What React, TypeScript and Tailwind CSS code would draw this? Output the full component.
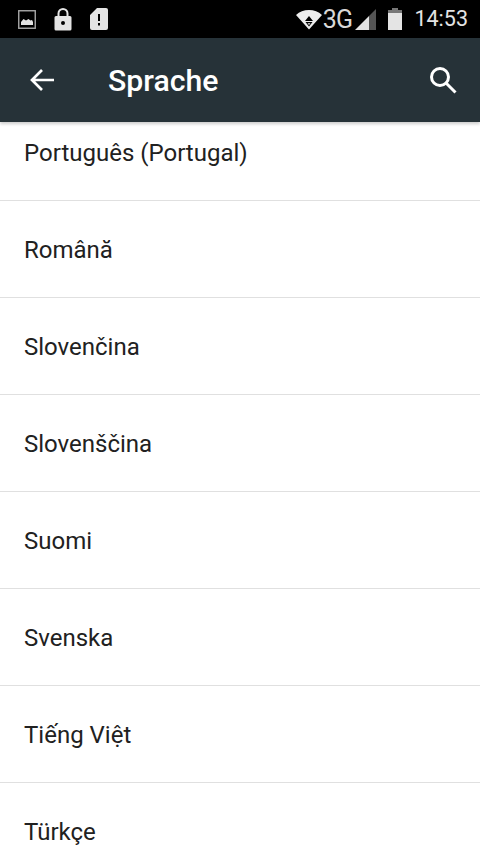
const LANGUAGES = ['Português (Portugal)', 'Română', 'Slovenčina', 'Slovenščina', 'Suomi', 'Svenska', 'Tiếng Việt', 'Türkçe'];

function StatusBar() {
    return (
        <div className="flex h-[38px] shrink-0 items-center bg-black pl-[18px] pr-[12px] text-[#e4e4e4]">
            <svg width="18" height="19" viewBox="0 0 18 19" className="mr-[18px]">
                <rect x="0.75" y="0.75" width="16.5" height="17.5" fill="none" stroke="#a8a8a8" strokeWidth="1.4" />
                <path d="M3 15v-3l2.500-3 2.500 1.500L10.500 9l2 1.500 1.500-.5 1 2v3z" fill="#e4e4e4" />
            </svg>
            <svg width="18" height="24" viewBox="0 0 18 24" className="mr-[18px]">
                <path d="M4.500 10V6.500a4.500 4.500 0 0 1 9 0V10" fill="none" stroke="#e4e4e4" strokeWidth="2" />
                <path fillRule="evenodd" d="M2 9h14a1.500 1.500 0 0 1 1.500 1.500V22a1.500 1.500 0 0 1-1.500 1.500H2A1.500 1.500 0 0 1 .5 22V10.500A1.500 1.500 0 0 1 2 9zm7 5a2 2 0 1 0 0 4 2 2 0 0 0 0-4z" fill="#e4e4e4" />
            </svg>
            <svg width="18" height="22" viewBox="0 0 18 22">
                <path fillRule="evenodd" d="M7 0h9a2 2 0 0 1 2 2v18a2 2 0 0 1-2 2H2a2 2 0 0 1-2-2V7zM8 6v7h2V6zm0 9v2.500h2V15z" fill="#e4e4e4" />
            </svg>
            <div className="ml-auto flex items-center">
                <svg width="26" height="22" viewBox="0 0 26 22">
                    <path fillRule="evenodd" d="M0 7C3.500 3.500 8 2 13 2s9.500 1.500 13 5L13 21.500zM13 8l-4 5h8zM9.500 14l3.500 4.500 3.500-4.500zM11.500 15.300h3L13 17z" fill="#ededed" />
                </svg>
                <span className="ml-[1px] text-[25px] leading-none tracking-[-0.7px] text-[#d8d8d8] [font-family:Roboto,sans-serif]">3G</span>
                <svg width="21" height="21" viewBox="0 0 21 21" className="ml-[3px]">
                    <path d="M0 21 14 7v14z" fill="#e4e4e4" />
                    <path d="M14 7 21 0v21h-7z" fill="#555" />
                </svg>
                <svg width="14" height="22" viewBox="0 0 14 22" className="ml-[12px]">
                    <rect x="4" y="0" width="6" height="2" fill="#777" />
                    <rect x="0" y="2" width="14" height="3" fill="#777" />
                    <rect x="0" y="5" width="14" height="17" fill="#e4e4e4" />
                </svg>
                <span className="ml-[12px] text-[21.500px] leading-none text-[#e4e4e4] [font-family:Roboto,sans-serif]">14:53</span>
            </div>
        </div>
    );
}

function Toolbar() {
    return (
        <header className="relative z-10 flex h-[84px] shrink-0 items-center bg-[#263238] pl-[30px] pr-[23px] shadow-[0_2px_3px_rgba(0,0,0,0.2)]">
            <svg width="24" height="24" viewBox="0 0 24 24" fill="none" stroke="#fff" strokeWidth="2.700">
                <path d="M25 12H2M12 2 2 12l10 10" />
            </svg>
            <h1 className="ml-[54px] pt-[2px] text-[30.200px] font-medium leading-none text-white [font-family:Roboto,sans-serif]">Sprache</h1>
            <svg width="28" height="28" viewBox="0 0 28 28" fill="none" stroke="#fff" strokeWidth="3" className="ml-auto">
                <circle cx="11" cy="11" r="8.500" />
                <path d="m17 17 9.500 9.500" />
            </svg>
        </header>
    );
}

export default function App() {
    return (
        <main className="flex h-[854px] w-[480px] flex-col overflow-hidden bg-white [font-family:Roboto,sans-serif]">
            <StatusBar />
            <Toolbar />
            <ul className="-mt-[18px]">
                {LANGUAGES.map((language) => (
                    <li key={language} className="flex h-[97px] items-center border-b border-[#e0e0e0] pl-[24px] pt-[2px] text-[24px] leading-none text-[#212121]">
                        {language}
                    </li>
                ))}
            </ul>
        </main>
    );
}
